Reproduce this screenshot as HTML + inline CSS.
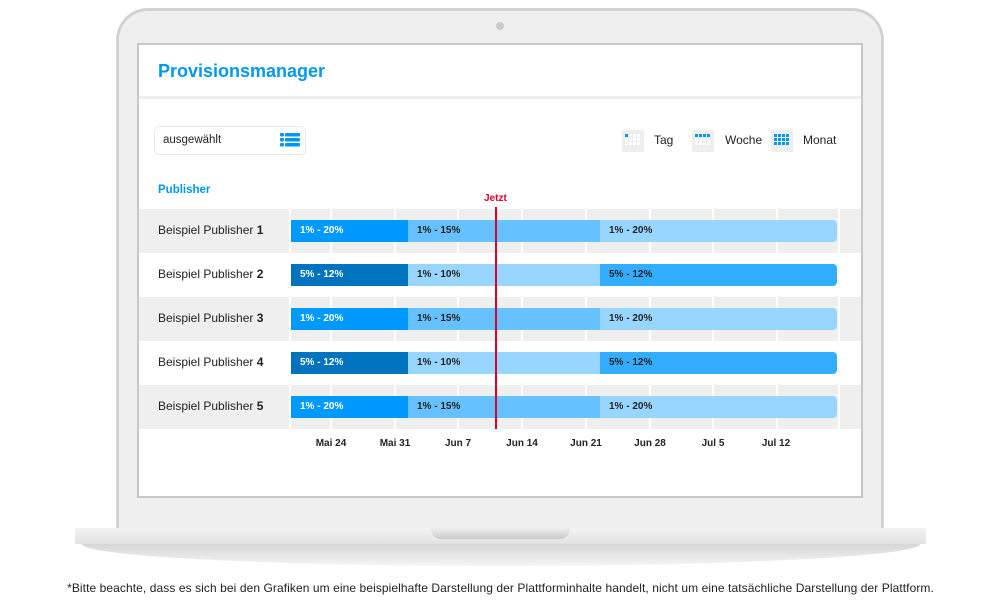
<!DOCTYPE html>
<html><head><meta charset="utf-8"><style>
*{margin:0;padding:0;box-sizing:border-box}
body{width:1001px;height:616px;background:#fff;position:relative;overflow:hidden;font-family:"Liberation Sans",sans-serif;color:#222}
.abs{position:absolute}
.lap{left:116px;top:8px;width:768px;height:530px;background:#efefef;border:3px solid #d3d3d3;border-radius:32px 32px 0 0;border-bottom:none}
.screen{left:137px;top:43px;width:726px;height:455px;background:#fff;border:2px solid #c8c8c8}
.base{left:75px;top:528px;width:851px;height:16px;background:linear-gradient(#f3f3f3,#e2e2e2);border-radius:2px}
.base2{left:82px;top:544px;width:838px;height:22px;background:linear-gradient(#d6d6d6,#f5f5f5);border-radius:0 0 50% 50%/0 0 100% 100%}
.notch{left:431px;top:528px;width:139px;height:11px;background:linear-gradient(#eee,#c9c9c9);border-radius:0 0 10px 10px}
.row{left:139px;width:722px;height:44px}
.bar{height:22px;font-size:10px;font-weight:bold;line-height:22px;padding-left:9px;color:#222}
.vl{top:209px;width:2px;height:220px;background:#fff}
.lbl{font-size:12px;color:#222;left:158px}
.dt{top:438px;font-size:10px;font-weight:bold;width:50px;text-align:center;margin-left:-25px}
.cal{width:20px;height:20px;background:#eee;border-radius:2px}
</style></head><body>
<div class="abs lap"></div>
<div class="abs" style="left:496px;top:22px;width:8px;height:8px;border-radius:50%;background:#ccc"></div>
<div class="abs screen"></div>
<div class="abs" style="left:139px;top:96px;width:722px;height:3px;background:#eee"></div>
<div class="abs" style="left:158px;top:61px;font-size:18px;font-weight:bold;color:#0099ee">Provisionsmanager</div>
<div class="abs" style="left:154px;top:126px;width:152px;height:29px;border:1px solid #e8e8e8;border-radius:5px"></div>
<div class="abs" style="left:163px;top:134px;font-size:11.5px">ausgewählt</div>
<svg class="abs" style="left:280px;top:133px" width="20" height="14"><g fill="#0099ee"><rect x="0" y="0" width="4" height="3.5" rx="1"/><rect x="5" y="0" width="15" height="3.5" rx="1"/><rect x="0" y="5" width="4" height="3.5" rx="1"/><rect x="5" y="5" width="15" height="3.5" rx="1"/><rect x="0" y="10" width="4" height="3.5" rx="1"/><rect x="5" y="10" width="15" height="3.5" rx="1"/></g></svg>
<svg class="abs" style="left:622px;top:130px" width="22" height="22"><rect width="22" height="22" rx="2" fill="#eee"/><g fill="#fff"><rect x="3" y="4" width="3" height="3"/><rect x="7" y="4" width="3" height="3"/><rect x="11" y="4" width="3" height="3"/><rect x="15" y="4" width="3" height="3"/><rect x="3" y="8" width="3" height="3"/><rect x="7" y="8" width="3" height="3"/><rect x="11" y="8" width="3" height="3"/><rect x="15" y="8" width="3" height="3"/><rect x="3" y="12" width="3" height="3"/><rect x="7" y="12" width="3" height="3"/><rect x="11" y="12" width="3" height="3"/><rect x="15" y="12" width="3" height="3"/></g><rect x="3" y="4" width="3" height="3" fill="#0099ee"/></svg>
<div class="abs" style="left:654px;top:133px;font-size:12px">Tag</div>
<svg class="abs" style="left:692px;top:130px" width="22" height="22"><rect width="22" height="22" rx="2" fill="#eee"/><g fill="#fff"><rect x="3" y="8" width="3" height="3"/><rect x="7" y="8" width="3" height="3"/><rect x="11" y="8" width="3" height="3"/><rect x="15" y="8" width="3" height="3"/><rect x="3" y="12" width="3" height="3"/><rect x="7" y="12" width="3" height="3"/><rect x="11" y="12" width="3" height="3"/><rect x="15" y="12" width="3" height="3"/></g><g fill="#0099ee"><rect x="3" y="4" width="3" height="3"/><rect x="7" y="4" width="3" height="3"/><rect x="11" y="4" width="3" height="3"/><rect x="15" y="4" width="3" height="3"/></g></svg>
<div class="abs" style="left:725px;top:133px;font-size:12px">Woche</div>
<svg class="abs" style="left:771px;top:130px" width="22" height="22"><rect width="22" height="22" rx="2" fill="#eee"/><g fill="#0099ee"><rect x="3" y="4" width="3" height="3"/><rect x="7" y="4" width="3" height="3"/><rect x="11" y="4" width="3" height="3"/><rect x="15" y="4" width="3" height="3"/><rect x="3" y="8" width="3" height="3"/><rect x="7" y="8" width="3" height="3"/><rect x="11" y="8" width="3" height="3"/><rect x="15" y="8" width="3" height="3"/><rect x="3" y="12" width="3" height="3"/><rect x="7" y="12" width="3" height="3"/><rect x="11" y="12" width="3" height="3"/><rect x="15" y="12" width="3" height="3"/></g></svg>
<div class="abs" style="left:803px;top:133px;font-size:12px">Monat</div>
<div class="abs" style="left:158px;top:184px;font-size:11.5px;font-weight:bold;color:#0099ee">Publisher</div>
<div class="abs" style="left:484px;top:193px;font-size:10px;font-weight:bold;color:#d9002a">Jetzt</div>

<div class="abs row" style="top:209px;background:#efefef"></div>
<div class="abs row" style="top:297px;background:#efefef"></div>
<div class="abs row" style="top:385px;background:#efefef"></div>
<div class="abs vl" style="left:289px"></div><div class="abs vl" style="left:330px"></div><div class="abs vl" style="left:394px"></div><div class="abs vl" style="left:457px"></div><div class="abs vl" style="left:521px"></div><div class="abs vl" style="left:585px"></div><div class="abs vl" style="left:649px"></div><div class="abs vl" style="left:712px"></div><div class="abs vl" style="left:776px"></div><div class="abs vl" style="left:838px"></div>

<div class="abs lbl" style="top:223px">Beispiel Publisher <b>1</b></div>
<div class="abs lbl" style="top:267px">Beispiel Publisher <b>2</b></div>
<div class="abs lbl" style="top:311px">Beispiel Publisher <b>3</b></div>
<div class="abs lbl" style="top:355px">Beispiel Publisher <b>4</b></div>
<div class="abs lbl" style="top:399px">Beispiel Publisher <b>5</b></div>

<div class="abs" style="left:291px;top:220px;display:flex;width:546px">
<div class="bar" style="width:117px;background:#0099ff;color:#fff">1% - 20%</div><div class="bar" style="width:192px;background:#66c2ff">1% - 15%</div><div class="bar" style="flex:1;background:#99d6ff;border-radius:0 4px 4px 0">1% - 20%</div></div>
<div class="abs" style="left:291px;top:264px;display:flex;width:546px">
<div class="bar" style="width:117px;background:#0073bf;color:#fff">5% - 12%</div><div class="bar" style="width:192px;background:#99d6ff">1% - 10%</div><div class="bar" style="flex:1;background:#33adff;border-radius:0 4px 4px 0">5% - 12%</div></div>
<div class="abs" style="left:291px;top:308px;display:flex;width:546px">
<div class="bar" style="width:117px;background:#0099ff;color:#fff">1% - 20%</div><div class="bar" style="width:192px;background:#66c2ff">1% - 15%</div><div class="bar" style="flex:1;background:#99d6ff;border-radius:0 4px 4px 0">1% - 20%</div></div>
<div class="abs" style="left:291px;top:352px;display:flex;width:546px">
<div class="bar" style="width:117px;background:#0073bf;color:#fff">5% - 12%</div><div class="bar" style="width:192px;background:#99d6ff">1% - 10%</div><div class="bar" style="flex:1;background:#33adff;border-radius:0 4px 4px 0">5% - 12%</div></div>
<div class="abs" style="left:291px;top:396px;display:flex;width:546px">
<div class="bar" style="width:117px;background:#0099ff;color:#fff">1% - 20%</div><div class="bar" style="width:192px;background:#66c2ff">1% - 15%</div><div class="bar" style="flex:1;background:#99d6ff;border-radius:0 4px 4px 0">1% - 20%</div></div>

<div class="abs" style="left:495px;top:207px;width:2px;height:222px;background:#d9002a"></div>

<div class="abs dt" style="left:331px">Mai 24</div><div class="abs dt" style="left:395px">Mai 31</div><div class="abs dt" style="left:458px">Jun 7</div><div class="abs dt" style="left:522px">Jun 14</div><div class="abs dt" style="left:586px">Jun 21</div><div class="abs dt" style="left:650px">Jun 28</div><div class="abs dt" style="left:713px">Jul 5</div><div class="abs dt" style="left:776px">Jul 12</div>

<div class="abs base2"></div>
<div class="abs base"></div>
<div class="abs notch"></div>
<div class="abs" style="left:0;width:1001px;top:581px;text-align:center;font-size:12px;letter-spacing:0.08px">*Bitte beachte, dass es sich bei den Grafiken um eine beispielhafte Darstellung der Plattforminhalte handelt, nicht um eine tatsächliche Darstellung der Plattform.</div>
</body></html>
